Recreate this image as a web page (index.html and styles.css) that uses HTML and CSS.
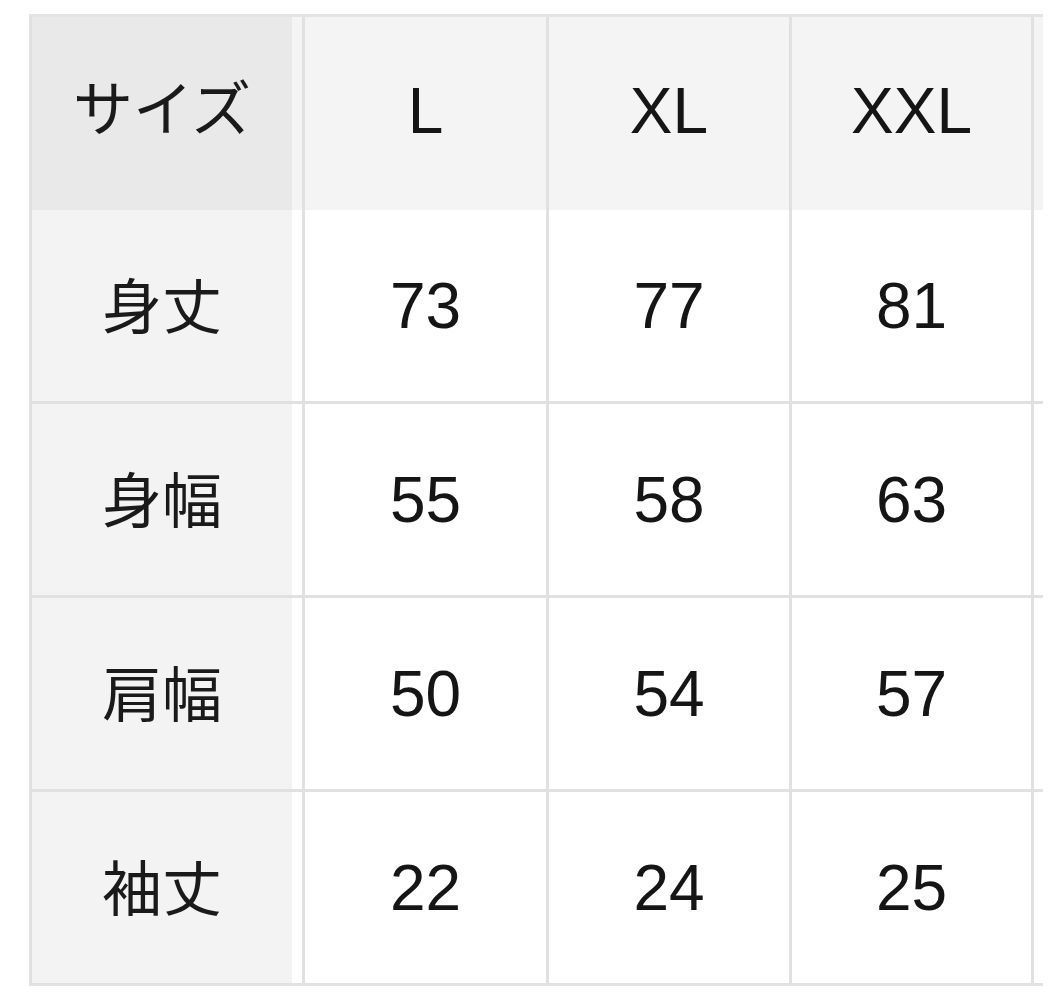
FILE: index.html
```html
<!DOCTYPE html>
<html lang="ja">
<head>
<meta charset="utf-8">
<title>サイズ表</title>
<link rel="stylesheet" href="styles.css">
</head>
<body>
<div class="table">
  <div class="row head">
    <div class="label corner">サイズ</div>
    <div class="gap"></div>
    <div class="cell c1">L</div>
    <div class="cell c2">XL</div>
    <div class="cell c3">XXL</div>
    <div class="tail"></div>
  </div>
  <div class="row">
    <div class="label">身丈</div>
    <div class="gap"></div>
    <div class="cell c1">73</div>
    <div class="cell c2">77</div>
    <div class="cell c3">81</div>
    <div class="tail"></div>
  </div>
  <div class="row">
    <div class="label">身幅</div>
    <div class="gap"></div>
    <div class="cell c1">55</div>
    <div class="cell c2">58</div>
    <div class="cell c3">63</div>
    <div class="tail"></div>
  </div>
  <div class="row">
    <div class="label">肩幅</div>
    <div class="gap"></div>
    <div class="cell c1">50</div>
    <div class="cell c2">54</div>
    <div class="cell c3">57</div>
    <div class="tail"></div>
  </div>
  <div class="row">
    <div class="label">袖丈</div>
    <div class="gap"></div>
    <div class="cell c1">22</div>
    <div class="cell c2">24</div>
    <div class="cell c3">25</div>
    <div class="tail"></div>
  </div>
</div>
</body>
</html>
```

FILE: styles.css
```css
html, body {
  margin: 0;
  padding: 0;
  background: #ffffff;
}

body {
  font-family: "Liberation Sans", "Noto Sans CJK JP", sans-serif;
  color: #151515;
}

.table {
  margin: 14px 0 0 29px;
  width: 1014px;
  display: flex;
  flex-direction: column;
}

.row {
  display: flex;
  height: 191px;
  border-bottom: 3px solid #e1e1e1;
  background: #ffffff;
}

.row.head {
  height: 193px;
  border-top: 3px solid #e4e4e4;
  border-bottom: none;
  background: #f4f4f4;
}

.label,
.cell {
  display: flex;
  align-items: center;
  justify-content: center;
  font-size: 64px;
  line-height: 1;
}

.label {
  width: 260px;
  border-left: 3px solid #e1e1e1;
  background: #f3f3f3;
  font-family: "Noto Sans CJK JP", sans-serif;
  font-size: 60px;
  font-weight: 400;
  color: #1a1a1a;
  padding-bottom: 6px;
}

.label.corner {
  background: #e9e9e9;
  padding-bottom: 18px;
}

.gap {
  width: 10px;
}

.cell {
  border-left: 3px solid #e1e1e1;
}

.head .cell {
  padding-bottom: 6px;
}

.c1 { width: 241px; }
.c2 { width: 240px; }
.c3 {
  width: 239px;
  border-right: 3px solid #e1e1e1;
}

.tail {
  width: 9px;
}
```
